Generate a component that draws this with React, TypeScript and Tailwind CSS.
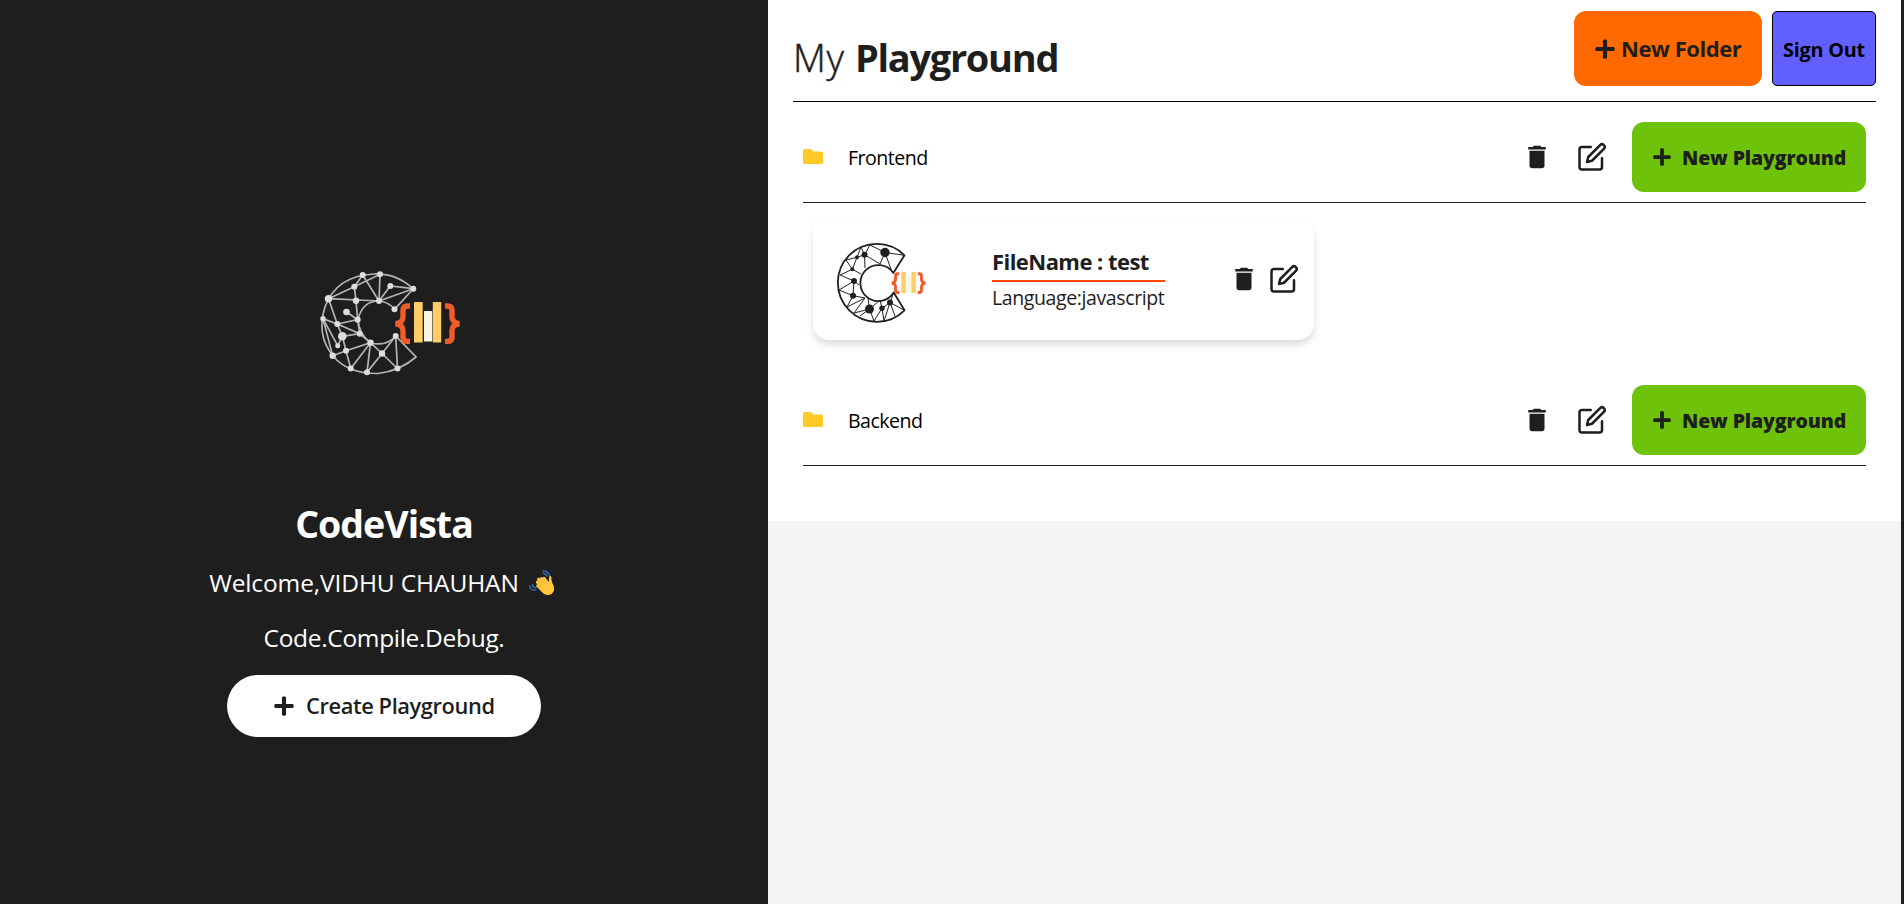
import { MdDelete } from "react-icons/md";
import { FiEdit } from "react-icons/fi";
import { FaPlus } from "react-icons/fa";

function Braces() {
  return (
    <>
      <rect x="114" y="52" width="8.700" height="40.500" rx=".6" fill="#ffcc66" />
      <rect x="124" y="61" width="8.300" height="30.500" rx=".6" fill="#f7f6e6" />
      <rect x="132.800" y="52" width="8.400" height="40.500" rx=".6" fill="#ffcc66" />
      <path
        d="M110 56h-2.500q-4.500 0-4.500 4.500v6q0 6.500-7.500 7.200q7.500.7 7.500 7.200v6q0 4.500 4.500 4.500h2.500M145 56h2.500q4.500 0 4.500 4.500v6q0 6.500 7.500 7.200q-7.500.7-7.500 7.200v6q0 4.500-4.500 4.500h-2.500"
        fill="none"
        stroke="#f15a29"
        strokeWidth="5.400"
      />
    </>
  );
}

const lightDots: [number, number, number][] = [
  [62.7, 25, 3], [80, 24.300, 3], [113.300, 38.700, 3], [90.300, 36, 3], [54.300, 36.700, 3], [28.500, 48.700, 3.700],
  [56, 50.700, 3.200], [79, 51, 3], [94.500, 59.300, 3], [46.500, 62, 3.300], [23, 68.700, 2.700], [57.700, 69.700, 3],
  [37.300, 74, 3], [59.700, 83.700, 3], [42.300, 86.300, 4.300], [95.700, 86, 3], [37.700, 95.700, 2.500], [70.500, 92.700, 3.200],
  [46, 100.700, 3], [32.700, 105.700, 3.200], [82, 103.500, 3.200], [50.700, 118.500, 3], [67, 122.300, 3], [97.500, 118.500, 3],
];

function LogoLight() {
  return (
    <svg className="h-[140px] w-[180px]" viewBox="0 0 180 140">
      <g fill="none" stroke="#b4b4b4" strokeWidth="1.700">
        <path d="M113 38.700Q96 23 74 24Q36 26 25 57Q16 85 33 106Q48 124 78 123.500Q100 121 116 107L95.700 86Q86 97 70.500 92.700Q59 84 58 70Q62 51 79 51Q89 52 94.500 59.300L113.300 38.700" />
        <path d="M62.700 25L54.300 36.700L56 50.700L57.700 69.700L59.700 83.700L70.500 92.700M62.700 25L79 51L80 24.300L54.300 36.700L28.500 48.700L79 51L90.300 36L113.300 38.700L79 51M28.500 48.700L37.300 74L23 68.700L37.700 95.700L42.300 86.300L37.300 74L57.700 69.700L46.500 62M37.300 74L59.700 83.700L42.300 86.300M23 68.700L32.700 105.700L46 100.700L42.300 86.300M46 100.700L70.500 92.700L50.700 118.500L46 100.700M70.500 92.700L67 122.300L82 103.500L70.500 92.700M82 103.500L95.700 86L97.500 118.500L82 103.500" />
      </g>
      {lightDots.map(([x, y, r]) => (
        <circle key={`${x}-${y}`} cx={x} cy={y} r={r} fill="#ddd" />
      ))}
      <Braces />
    </svg>
  );
}

const darkDots: [number, number, number][] = [
  [85, 37.500, 4.700], [64.500, 39.700, 3], [57, 42.300, 2], [52.300, 54.300, 2], [54, 66, 3], [53, 80.700, 3],
  [69.500, 94, 4.500], [82, 93.300, 2.700], [90, 87.500, 3],
];

function LogoDark() {
  return (
    <svg className="h-[140px] w-[180px]" viewBox="0 0 180 140">
      <g fill="none" stroke="#231f20" strokeLinejoin="round">
        <path strokeWidth="1.800" d="M104.500 40.300A39 39 0 1 0 104.500 95.300L93.700 77.500A18 18 0 1 1 93.300 58Z" />
        <path strokeWidth="1" d="M85 37.500L104.500 40.300M85 37.500L80 49M85 37.500L70 30L64.500 39.700L57 42.300L61 32L64.500 39.700L80 49M92 57L85 37.500M64.500 39.700L65 53M57 42.300L46 45L52.300 54.300L57 42.300M52.300 54.300L40 60L54 66L59 70M52.300 54.300L61 59M54 66L39 75L53 80.700L54 66M53 80.700L47 92L65 83L53 80.700M65 83L54 98L69.500 94L68 83M60 101L69.500 94L74 106L82 93.300L84 106L90 87.500L104 95M82 93.300L90 87.500M90 87.500L93.700 77.500M69.500 94L80 85L82 93.300M90 87.500L95 101" />
      </g>
      {darkDots.map(([x, y, r]) => (
        <circle key={`${x}-${y}`} cx={x} cy={y} r={r} fill="#231f20" />
      ))}
      <svg x="91.300" y="56.800" width="34.700" height="22.500" viewBox="95 52.500 65.500 42">
        <Braces />
      </svg>
    </svg>
  );
}

function Wave() {
  return (
    <svg className="h-[26px] w-[26px]" viewBox="0 0 26 26">
      <g fill="none" stroke="#3f74c8" strokeWidth="1.200" strokeLinecap="round">
        <path d="M14 1.200q5-1 6.700 4.800M14 3.500q3-.3 4.200 3M.8 15.500q0 5.500 6 4.500M3.300 14.500q.3 3.300 4 3.300" />
      </g>
      <path
        fill="#ffc83d"
        d="M8.500 8.200c1-.8 1.700-.3 2.300.4c0-1.300 1-2.300 2.300-1.200l.6.6c.3-1.400 1.500-1.700 2.400-.7l3.700 4.600c.5-.8-.2-3.400.4-5c.5-1.300 1.900-1.100 2.100.2c.3 2.200 0 4 1.300 6.600c2 3.600 2.300 7.300-.6 9.700c-3.200 2.600-7 2-9.700-.8l-5.800-6c-1-1.100 0-2.200.8-2.200c-1.400-1.400-2-2.500-.9-3.500q.6-.6 1.300-.2c-.7-1-.9-1.800-.2-2.500Z"
      />
      <path d="M10.800 8.600l4 4.600M8.700 11l4 4.500M8.300 14.400l3 3" fill="none" stroke="#e39a22" strokeWidth=".7" />
    </svg>
  );
}

function FolderIcon() {
  return (
    <svg className="h-4 w-5" viewBox="0 0 20 16">
      <path fill="#ffca28" d="M1.500 0H8l2.500 2.500h8A1.500 1.500 0 0 1 20 4v9.500a1.500 1.500 0 0 1-1.500 1.500h-17A1.500 1.500 0 0 1 0 13.500v-12A1.500 1.500 0 0 1 1.500 0Z" />
    </svg>
  );
}

function FolderHeader({ name }: { name: string }) {
  return (
    <div className="flex h-[81px] items-center justify-between border-b border-[#1e1e1e] pb-[10px]">
      <div className="flex items-center">
        <FolderIcon />
        <span className="ml-[25px] pt-0.5 text-[19.600px] leading-7 tracking-[-0.540px] whitespace-nowrap">{name}</span>
      </div>
      <div className="flex items-center text-[#1e1e1e]">
        <MdDelete className="size-[30px]" />
        <FiEdit className="ml-[25px] size-[30px]" />
        <button className="ml-[25px] flex h-[70px] w-[234px] items-center rounded-xl bg-[#6fc20a] pl-5">
          <FaPlus className="size-5" />
          <span className="ml-2.5 pt-0.5 text-[19.500px] font-extrabold tracking-[-0.120px] whitespace-nowrap">New Playground</span>
        </button>
      </div>
    </div>
  );
}

export default function App() {
  return (
    <div className="flex h-[904px] w-full overflow-hidden bg-[#1e1e1e] font-['Open_Sans','Noto_Sans',sans-serif]">
      <aside className="flex w-[768px] shrink-0 flex-col items-center text-white">
        <div className="mt-[250px] pl-[12px]">
          <LogoLight />
        </div>
        <h1 className="mt-[109px] text-[37.500px] leading-[50px] font-bold tracking-[-0.960px] whitespace-nowrap">CodeVista</h1>
        <div className="mt-[18px] flex h-[32px] items-center gap-2.5 pr-[4px]">
          <span className="text-[24.500px] tracking-[-0.120px] whitespace-nowrap">Welcome,VIDHU CHAUHAN</span>
          <Wave />
        </div>
        <p className="mt-[23px] text-[24.500px] leading-8 tracking-[-0.320px] whitespace-nowrap">Code.Compile.Debug.</p>
        <button className="mt-[21px] flex h-[62px] w-[314px] items-center rounded-full bg-white pl-[46px] text-[#1e1e1e]">
          <FaPlus className="size-[22px]" />
          <span className="ml-[11px] text-[21.800px] font-[560] tracking-[-0.380px] whitespace-nowrap">Create Playground</span>
        </button>
      </aside>
      <main className="h-full w-[1133px] shrink-0 bg-[#f3f4f6]">
        <section className="h-[521px] bg-white px-[25px]">
          <header className="flex h-[102px] items-start justify-between border-b border-black pt-[11px]">
            <h2 className="mt-[21px] text-[38px] leading-[50px] whitespace-nowrap text-[#1e1e1e]">
              <span className="font-light tracking-[0.600px] [-webkit-text-stroke:0.5px_#1e1e1e]">My </span>
              <span className="font-bold tracking-[-1.300px]">Playground</span>
            </h2>
            <div className="flex gap-2.5">
              <button className="flex h-[75px] w-[188px] items-center rounded-xl bg-[#ff6900] pl-5 text-[#1e1e1e]">
                <FaPlus className="size-[22px]" />
                <span className="ml-[5px] text-[22px] font-bold tracking-[-0.440px] whitespace-nowrap">New Folder</span>
              </button>
              <button className="h-[75px] w-[104px] rounded-[5px] border border-black bg-[#615fff] pt-0.5 text-[19.800px] font-bold tracking-[-0.200px] whitespace-nowrap">
                Sign Out
              </button>
            </div>
          </header>
          <div className="px-2.5 pt-5">
            <FolderHeader name="Frontend" />
            <article className="mt-[15px] ml-2.5 flex h-[122px] w-[501px] rounded-2xl bg-white text-[#1e1e1e] shadow-[0_5px_8px_-1px_rgba(0,0,0,0.16)]">
              <div className="-mt-[3px] -ml-[13px] w-[192px] shrink-0">
                <LogoDark />
              </div>
              <div className="flex w-[173px] flex-col pt-[28px]">
                <div className="h-[36px] border-b-2 border-[#ff4500] text-[22px] leading-[30px] font-bold tracking-[-0.550px] whitespace-nowrap">
                  FileName : test
                </div>
                <div className="text-[19.500px] leading-8 tracking-[-0.390px] whitespace-nowrap">Language:javascript</div>
              </div>
              <div className="mt-[46px] ml-[64px] flex gap-2.5">
                <MdDelete className="size-[30px]" />
                <FiEdit className="size-[30px]" />
              </div>
            </article>
            <div className="mt-[45px]">
              <FolderHeader name="Backend" />
            </div>
          </div>
        </section>
      </main>
    </div>
  );
}
